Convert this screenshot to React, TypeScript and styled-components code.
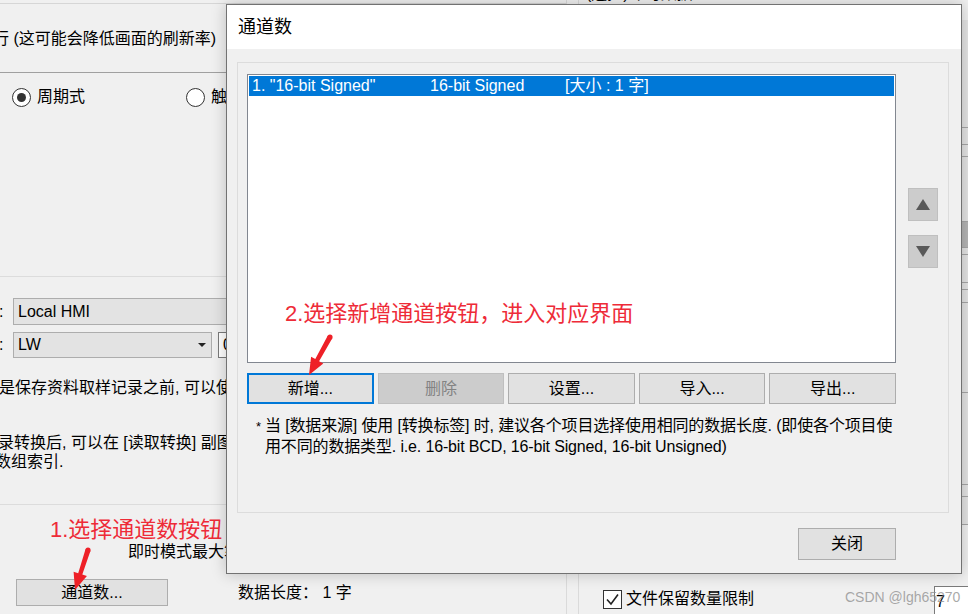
import React from "react";
import styled, { createGlobalStyle } from "styled-components";

const FONT = `"Liberation Sans", "Noto Sans CJK SC", sans-serif`;

const Global = createGlobalStyle`
  html, body { margin: 0; padding: 0; background: #f0f0f0; }
  body { font-family: ${FONT}; }
  #root { width: 968px; height: 614px; }
`;

const Screen = styled.div`
  position: relative;
  width: 968px;
  height: 614px;
  overflow: hidden;
  background: #f0f0f0;
  display: grid;
  grid-template-columns: 567px 1fr;
  column-gap: 11px;
  font-family: ${FONT};
  color: #000;
  font-size: 16px;
  line-height: 20px;
`;

/* ---------- background : left column ---------- */
const LeftCol = styled.div`
  display: flex;
  flex-direction: column;
  border-right: 1px solid #dadada;
  min-width: 0;
`;

const TopRule = styled.div`
  flex: none;
  height: 3px;
  border-bottom: 1px solid #d6d6d6;
`;

const Section = styled.div<{ $h: number; $rule: string; $pt?: number; $center?: boolean }>`
  flex: none;
  box-sizing: border-box;
  height: ${(p) => p.$h}px;
  border-bottom: 1px solid ${(p) => p.$rule};
  padding-top: ${(p) => p.$pt ?? 0}px;
  display: flex;
  flex-direction: column;
  justify-content: ${(p) => (p.$center ? "center" : "flex-start")};
`;

const Line = styled.div<{ $shift?: number; $mt?: number; $lh?: number }>`
  white-space: nowrap;
  margin-left: ${(p) => p.$shift ?? 0}px;
  margin-top: ${(p) => p.$mt ?? 0}px;
  line-height: ${(p) => p.$lh ?? 20}px;
`;

const RadioRow = styled.div`
  display: flex;
  align-items: center;
  height: 20px;
  padding-left: 12px;
`;

const RadioItem = styled.label`
  display: flex;
  align-items: center;
  gap: 6px;
  width: 174px;
  flex: none;
  white-space: nowrap;
`;

const RadioDot = styled.span<{ $on?: boolean }>`
  box-sizing: border-box;
  width: 19px;
  height: 19px;
  border-radius: 50%;
  border: 1px solid #333;
  background: #fff;
  display: flex;
  align-items: center;
  justify-content: center;
  &::after {
    content: "";
    width: 9px;
    height: 9px;
    border-radius: 50%;
    background: ${(p) => (p.$on ? "#333" : "transparent")};
  }
`;

const FieldRow = styled.div<{ $mt?: number }>`
  display: flex;
  align-items: center;
  margin-top: ${(p) => p.$mt ?? 0}px;
`;

const Colon = styled.span`
  width: 14px;
  flex: none;
  margin-left: -1px;
`;

const ReadBox = styled.div<{ $w: number; $h: number }>`
  box-sizing: border-box;
  width: ${(p) => p.$w}px;
  height: ${(p) => p.$h}px;
  flex: none;
  background: #e3e3e3;
  border: 1px solid #adadad;
  padding-left: 4px;
  display: flex;
  align-items: center;
  justify-content: space-between;
  white-space: nowrap;
`;

const Caret = styled.span`
  width: 0;
  height: 0;
  margin-right: 5px;
  border-left: 4px solid transparent;
  border-right: 4px solid transparent;
  border-top: 4px solid #222;
`;

const WhiteBox = styled.div`
  box-sizing: border-box;
  width: 80px;
  height: 26px;
  flex: none;
  margin-left: 6px;
  background: #fff;
  border: 1px solid #7a7a7a;
  padding-left: 4px;
  display: flex;
  align-items: center;
`;

const BottomRow = styled.div`
  display: flex;
  align-items: center;
  margin-top: 17px;
`;

const WinButton = styled.button<{ $w: number; $h: number }>`
  box-sizing: border-box;
  width: ${(p) => p.$w}px;
  height: ${(p) => p.$h}px;
  flex: none;
  background: #e1e1e1;
  border: 1px solid #adadad;
  font-family: ${FONT};
  font-size: 16px;
  line-height: 20px;
  color: #000;
  padding: 0;
  margin: 0;
`;

/* ---------- background : right column ---------- */
const RightCol = styled.div`
  display: flex;
  flex-direction: column;
  border-left: 1px solid #dadada;
  min-width: 0;
`;

const Caption = styled.div`
  margin-top: -16px;
  padding-left: 7px;
  height: 20px;
  white-space: nowrap;
`;

const Table = styled.div`
  margin-top: 16px;
  margin-left: 10px;
  display: flex;
  flex-direction: column;
  background: #e4e4e4;
`;

const TableRow = styled.div<{ $h: number; $dark?: boolean }>`
  box-sizing: border-box;
  height: ${(p) => p.$h}px;
  border-bottom: 1px solid #a6a6a6;
  background: ${(p) => (p.$dark ? "#b5b5b5" : "#e4e4e4")};
`;

const CheckRow = styled.div`
  margin-top: auto;
  height: 30px;
  display: flex;
  align-items: center;
  padding-left: 24px;
`;

const CheckBox = styled.span`
  box-sizing: border-box;
  width: 19px;
  height: 19px;
  flex: none;
  border: 1px solid #333;
  background: #fff;
  display: flex;
  align-items: center;
  justify-content: center;
`;

const CheckLabel = styled.span`
  margin-left: 4px;
  white-space: nowrap;
`;

const NumInput = styled.div`
  box-sizing: border-box;
  margin-left: auto;
  margin-right: -8px;
  align-self: flex-start;
  margin-top: 2px;
  width: 42px;
  height: 32px;
  background: #fff;
  border: 1px solid #7a7a7a;
  padding-left: 1px;
  display: flex;
  align-items: center;
`;

/* ---------- dialog ---------- */
const Dialog = styled.div`
  position: absolute;
  left: 226px;
  top: 4px;
  width: 736px;
  height: 570px;
  box-sizing: border-box;
  border: 1px solid #727272;
  box-shadow: 0 0 14px rgba(0, 0, 0, 0.22);
  display: flex;
  flex-direction: column;
  background: #f0f0f0;
`;

const TitleBar = styled.div`
  flex: none;
  height: 44px;
  background: #fff;
  padding-left: 11px;
  display: flex;
  align-items: center;
  font-size: 18px;
`;

const DialogBody = styled.div`
  flex: 1;
  display: flex;
  flex-direction: column;
  padding: 13px 12px 13px 10px;
`;

const Group = styled.div`
  box-sizing: border-box;
  height: 451px;
  border: 1px solid #dcdcdc;
  padding: 11px 10px 0 9px;
  display: grid;
  grid-template-columns: 649px 30px;
  column-gap: 12px;
  align-items: start;
`;

const MainCol = styled.div`
  display: flex;
  flex-direction: column;
`;

const ListBox = styled.div`
  box-sizing: border-box;
  height: 289px;
  background: #fff;
  border: 1px solid #828790;
  padding: 1px;
`;

const ListRow = styled.div<{ $selected?: boolean }>`
  height: 20px;
  display: grid;
  grid-template-columns: 178px 135px auto;
  align-items: center;
  padding-left: 3px;
  background: ${(p) => (p.$selected ? "#0078d7" : "transparent")};
  color: ${(p) => (p.$selected ? "#fff" : "#000")};
  white-space: nowrap;
  font-size: 16px;
`;

const ActionRow = styled.div`
  margin-top: 10px;
  display: grid;
  grid-template-columns: repeat(5, 1fr);
  column-gap: 4px;
`;

const ActionButton = styled.button<{ $focus?: boolean; $disabled?: boolean }>`
  box-sizing: border-box;
  height: 31px;
  padding: 0;
  margin: 0;
  font-family: ${FONT};
  font-size: 16px;
  line-height: 20px;
  background: ${(p) => (p.$disabled ? "#cccccc" : "#e1e1e1")};
  color: ${(p) => (p.$disabled ? "#838383" : "#000")};
  border: ${(p) =>
    p.$focus ? "2px solid #0078d7" : p.$disabled ? "1px solid #bfbfbf" : "1px solid #adadad"};
`;

const Note = styled.div`
  margin-top: 12px;
  display: flex;
  padding-left: 9px;
  line-height: 21px;
  font-size: 16px;
  letter-spacing: -0.15px;
`;

const Star = styled.span`
  width: 9px;
  flex: none;
  font-size: 13px;
`;

const SideCol = styled.div`
  margin-top: 114px;
  display: flex;
  flex-direction: column;
  gap: 14px;
`;

const MoveButton = styled.div`
  box-sizing: border-box;
  width: 30px;
  height: 33px;
  background: #cccccc;
  border: 1px solid #bfbfbf;
  display: flex;
  align-items: center;
  justify-content: center;
`;

const Footer = styled.div`
  margin-top: 15px;
  display: flex;
  justify-content: flex-end;
  padding-right: 53px;
`;

/* ---------- overlays ---------- */
const Annotation = styled.div<{ $left: number; $top: number }>`
  position: absolute;
  left: ${(p) => p.$left}px;
  top: ${(p) => p.$top}px;
  color: #ee2b38;
  font-size: 22px;
  line-height: 24px;
  white-space: nowrap;
  font-family: ${FONT};
`;

const ArrowSvg = styled.svg<{ $left: number; $top: number }>`
  position: absolute;
  left: ${(p) => p.$left}px;
  top: ${(p) => p.$top}px;
  overflow: visible;
`;

const Watermark = styled.div`
  position: absolute;
  left: 845px;
  top: 588px;
  font-family: "Liberation Sans", sans-serif;
  font-size: 14px;
  line-height: 18px;
  color: rgba(140, 140, 140, 0.75);
  white-space: nowrap;
`;

function RedArrow({ x1, y1, x2, y2 }: { x1: number; y1: number; x2: number; y2: number }) {
  const pad = 12;
  const minX = Math.min(x1, x2) - pad;
  const minY = Math.min(y1, y2) - pad;
  const w = Math.abs(x2 - x1) + pad * 2;
  const h = Math.abs(y2 - y1) + pad * 2;
  const dx = x2 - x1;
  const dy = y2 - y1;
  const len = Math.hypot(dx, dy);
  const ux = dx / len;
  const uy = dy / len;
  const nx = -uy;
  const ny = ux;
  const headL = 17;
  const headW = 7;
  const sT = 2.6;
  const sH = 2.2;
  const tx = x1 - minX;
  const ty = y1 - minY;
  const px = x2 - minX;
  const py = y2 - minY;
  const bx = px - ux * headL;
  const by = py - uy * headL;
  const pts = [
    [tx + nx * sT, ty + ny * sT],
    [bx + nx * sH, by + ny * sH],
    [bx + nx * headW, by + ny * headW],
    [px, py],
    [bx - nx * headW, by - ny * headW],
    [bx - nx * sH, by - ny * sH],
    [tx - nx * sT, ty - ny * sT],
  ]
    .map((p) => p.map((v) => v.toFixed(1)).join(","))
    .join(" ");
  return (
    <ArrowSvg $left={minX} $top={minY} width={w} height={h} viewBox={`0 0 ${w} ${h}`}>
      <polygon points={pts} fill="#ee2027" />
      <circle cx={tx} cy={ty} r={sT} fill="#ee2027" />
    </ArrowSvg>
  );
}

const tableRows: { h: number; dark?: boolean }[] = [
  { h: 108 },
  { h: 17 },
  { h: 12 },
  { h: 65 },
  { h: 26, dark: true },
  { h: 7 },
  { h: 28 },
  { h: 7 },
  { h: 13 },
  { h: 90 },
  { h: 92 },
  { h: 12 },
  { h: 28 },
];

export default function App() {
  return (
    <>
      <Global />
      <Screen>
        <LeftCol>
          <TopRule />
          <Section $h={69} $rule="#a0a0a0" $pt={2} $center>
            <Line $shift={-7}>行 (这可能会降低画面的刷新率)</Line>
          </Section>
          <Section $h={204} $rule="#dcdcdc" $pt={14}>
            <RadioRow>
              <RadioItem>
                <RadioDot $on />
                周期式
              </RadioItem>
              <RadioItem>
                <RadioDot />
                触发式
              </RadioItem>
            </RadioRow>
          </Section>
          <Section $h={228} $rule="#dcdcdc" $pt={21}>
            <FieldRow>
              <Colon>:</Colon>
              <ReadBox $w={320} $h={27}>Local HMI</ReadBox>
            </FieldRow>
            <FieldRow $mt={7}>
              <Colon>:</Colon>
              <ReadBox $w={199} $h={26}>
                LW
                <Caret />
              </ReadBox>
              <WhiteBox>0</WhiteBox>
            </FieldRow>
            <Line $mt={20} $shift={-1}>是保存资料取样记录之前, 可以使用数据转换功能</Line>
            <Line $mt={35} $shift={-2} $lh={19}>录转换后, 可以在 [读取转换] 副图中设置</Line>
            <Line $shift={-5} $lh={19}>数组索引.</Line>
          </Section>
          <Section $h={109} $rule="transparent" $pt={37}>
            <Line $shift={128}>即时模式最大笔数 :</Line>
            <BottomRow>
              <Line $shift={16}>
                <WinButton $w={152} $h={27}>通道数...</WinButton>
              </Line>
              <Line $shift={70}>数据长度： 1 字</Line>
            </BottomRow>
          </Section>
        </LeftCol>

        <RightCol>
          <Caption>(遥控)即时数据</Caption>
          <Table>
            {tableRows.map((r, i) => (
              <TableRow key={i} $h={r.h} $dark={r.dark} />
            ))}
          </Table>
          <CheckRow>
            <CheckBox>
              <svg width="15" height="15" viewBox="0 0 15 15">
                <path d="M2 7.5 L6 12 L13 2.5" fill="none" stroke="#222" strokeWidth="1.6" />
              </svg>
            </CheckBox>
            <CheckLabel>文件保留数量限制</CheckLabel>
            <NumInput>7</NumInput>
          </CheckRow>
        </RightCol>

        <Annotation $left={50} $top={518}>1.选择通道数按钮</Annotation>
        <RedArrow x1={88} y1={550} x2={75} y2={590} />

        <Dialog>
          <TitleBar>通道数</TitleBar>
          <DialogBody>
            <Group>
              <MainCol>
                <ListBox>
                  <ListRow $selected>
                    <span>1. "16-bit Signed"</span>
                    <span>16-bit Signed</span>
                    <span>[大小 : 1 字]</span>
                  </ListRow>
                </ListBox>
                <ActionRow>
                  <ActionButton $focus>新增...</ActionButton>
                  <ActionButton $disabled>删除</ActionButton>
                  <ActionButton>设置...</ActionButton>
                  <ActionButton>导入...</ActionButton>
                  <ActionButton>导出...</ActionButton>
                </ActionRow>
                <Note>
                  <Star>*</Star>
                  <div>
                    <Line>当 [数据来源] 使用 [转换标签] 时, 建议各个项目选择使用相同的数据长度. (即使各个项目使</Line>
                    <Line $lh={21}>用不同的数据类型. i.e. 16-bit BCD, 16-bit Signed, 16-bit Unsigned)</Line>
                  </div>
                </Note>
              </MainCol>
              <SideCol>
                <MoveButton>
                  <svg width="14" height="11" viewBox="0 0 14 11">
                    <polygon points="7,0 14,11 0,11" fill="#595959" />
                  </svg>
                </MoveButton>
                <MoveButton>
                  <svg width="14" height="11" viewBox="0 0 14 11">
                    <polygon points="0,0 14,0 7,11" fill="#595959" />
                  </svg>
                </MoveButton>
              </SideCol>
            </Group>
            <Footer>
              <WinButton $w={98} $h={32}>关闭</WinButton>
            </Footer>
          </DialogBody>
        </Dialog>

        <Annotation $left={285} $top={302}>2.选择新增通道按钮，进入对应界面</Annotation>
        <RedArrow x1={330} y1={337} x2={309} y2={375} />

        <Watermark>CSDN @lgh65270</Watermark>
      </Screen>
    </>
  );
}
